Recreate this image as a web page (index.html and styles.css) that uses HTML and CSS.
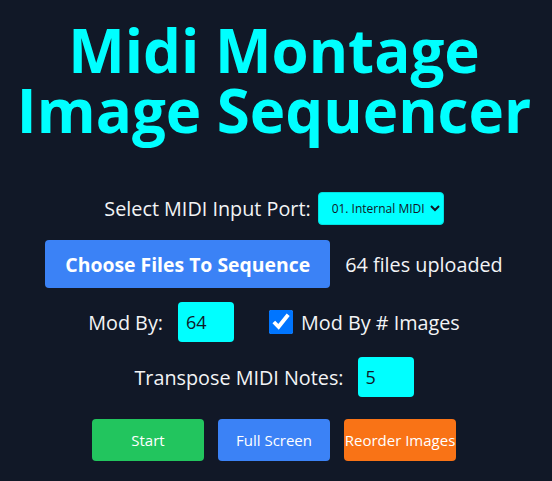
FILE: index.html
```html
<!DOCTYPE html>
<html lang="en">
<head>
<meta charset="utf-8">
<title>Midi Montage Image Sequencer</title>
<link rel="stylesheet" href="styles.css">
</head>
<body>
<main class="app">
  <h1 class="title">Midi Montage<br>Image Sequencer</h1>
  <div class="row row-port">
    <label class="label" for="port">Select MIDI Input Port:</label>
    <select id="port" class="port-select">
      <option>01. Internal MIDI</option>
    </select>
  </div>
  <div class="row row-files">
    <button class="btn btn-choose" type="button">Choose Files To Sequence</button>
    <span class="label">64 files uploaded</span>
  </div>
  <div class="row row-mod">
    <label class="label" for="mod">Mod By:</label>
    <input id="mod" class="num-input" type="text" value="64">
    <label class="check-label">
      <input class="check" type="checkbox" checked>
      <span>Mod By # Images</span>
    </label>
  </div>
  <div class="row row-transpose">
    <label class="label" for="tr">Transpose MIDI Notes:</label>
    <input id="tr" class="num-input" type="text" value="5">
  </div>
  <div class="row row-actions">
    <button class="btn btn-small btn-green" type="button">Start</button>
    <button class="btn btn-small btn-blue" type="button">Full Screen</button>
    <button class="btn btn-small btn-orange" type="button">Reorder Images</button>
  </div>
</main>
</body>
</html>
```
FILE: styles.css
```css
* { box-sizing: border-box; }
html, body {
  margin: 0;
  padding: 0;
  background: #111827;
}
body {
  font-family: "Open Sans", "Noto Sans", sans-serif;
  color: #f3f4f6;
  width: 552px;
  height: 481px;
  overflow: hidden;
}
.app {
  width: 548px;
  display: flex;
  flex-direction: column;
  align-items: center;
  padding-top: 20px;
}
.title {
  margin: 0;
  font-size: 60px;
  line-height: 60px;
  font-weight: 700;
  color: #00ffff;
  text-align: center;
}
.row {
  display: flex;
  align-items: center;
  justify-content: center;
}
.label {
  font-size: 19.8px;
  color: #f3f4f6;
}
.row-port { margin-top: 52px; gap: 7px; }
.port-select {
  width: 126px;
  height: 33px;
  background: #00ffff;
  color: #111827;
  border: 1px solid #00e0e0;
  border-radius: 4px;
  font-family: inherit;
  font-size: 12px;
  padding: 0 3px 0 9px;
}
.row-files { margin-top: 15px; gap: 15px; }
.btn {
  border: none;
  color: #ffffff;
  font-family: inherit;
  border-radius: 4px;
}
.btn-choose {
  background: #3b82f6;
  height: 48px;
  padding: 0 20px;
  font-size: 19.4px;
  font-weight: 700;
}
.row-mod { margin-top: 14px; }
.row-mod .label { margin-right: 15px; }
.num-input {
  width: 56px;
  height: 40px;
  background: #00ffff;
  color: #111827;
  border: none;
  border-radius: 4px;
  padding: 0 8px;
  font-family: inherit;
  font-size: 18px;
}
.check-label {
  display: flex;
  align-items: center;
  gap: 8px;
  margin-left: 35px;
  font-size: 19.8px;
}
.check {
  width: 24px;
  height: 24px;
  margin: 0;
  accent-color: #0075ff;
}
.row-transpose { margin-top: 15px; gap: 14px; }
.row-actions { margin-top: 22px; gap: 14px; }
.btn-small {
  width: 112px;
  height: 42px;
  padding: 0;
  font-size: 15px;
  white-space: nowrap;
}
.btn-green { background: #22c55e; }
.btn-blue { background: #3b82f6; }
.btn-orange { background: #f97316; }
```
